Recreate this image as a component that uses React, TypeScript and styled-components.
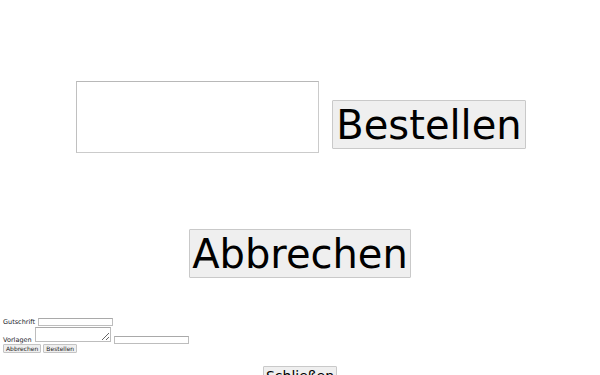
import React from 'react';
import styled, { createGlobalStyle } from 'styled-components';

const GlobalStyle = createGlobalStyle`
  html, body {
    margin: 0;
    padding: 0;
    background: #fff;
    font-family: "DejaVu Sans", "Liberation Sans", sans-serif;
    color: #000;
    overflow: hidden;
  }
`;

const Page = styled.div`
  width: 600px;
  height: 375px;
  display: flex;
  flex-direction: column;
  overflow: hidden;
`;

const OrderRow = styled.div`
  display: flex;
  justify-content: center;
  align-items: flex-end;
  gap: 13px;
  margin-top: 81px;
  padding-left: 2px;
`;

const BigInput = styled.input`
  box-sizing: border-box;
  width: 243px;
  height: 72px;
  margin: 0;
  border: 1px solid #cbcbcb;
  border-top-color: #b8b8b8;
  border-left-color: #c0c0c0;
  background: #fff;
  outline: none;
`;

const Button = styled.button<{ $size: number; $height: number; $pad: number }>`
  box-sizing: border-box;
  height: ${(p) => p.$height}px;
  margin: 0;
  padding: 0 ${(p) => p.$pad}px;
  font-family: "DejaVu Sans", sans-serif;
  font-size: ${(p) => p.$size}px;
  line-height: 1;
  color: #000;
  background: #efefef;
  border: 1px solid #c9c9c9;
  border-radius: 1px;
  white-space: nowrap;
`;

const OrderButton = styled(Button)`
  margin-bottom: 4px;
`;

const CenterRow = styled.div<{ $top: number }>`
  display: flex;
  justify-content: center;
  margin-top: ${(p) => p.$top}px;
`;

const SmallForm = styled.form`
  display: flex;
  flex-direction: column;
  align-items: flex-start;
  margin-top: 38px;
  padding-left: 3px;
  font-size: 6.5px;
`;

const FieldRow = styled.div<{ $align: string; $height: number }>`
  display: flex;
  align-items: ${(p) => p.$align};
  gap: 3px;
  height: ${(p) => p.$height}px;
`;

const Label = styled.label`
  font-size: 6.5px;
  line-height: 8px;
  color: #1a1a2a;
`;

const SmallInput = styled.input`
  box-sizing: border-box;
  width: 75px;
  height: 8px;
  margin: 0;
  padding: 0;
  border: 1px solid #bdbdbd;
  border-top-color: #a9a9a9;
  background: #fff;
`;

const SmallTextArea = styled.textarea`
  box-sizing: border-box;
  width: 76px;
  height: 15px;
  margin: 0 0 2px 0;
  padding: 0;
  border: 1px solid #bdbdbd;
  border-top-color: #a9a9a9;
  resize: both;
  font-size: 6px;
`;

const ButtonRow = styled.div`
  display: flex;
  gap: 2px;
`;

const SmallButton = styled.button`
  box-sizing: border-box;
  height: 9px;
  margin: 0;
  padding: 0 2px;
  font-family: "DejaVu Sans", sans-serif;
  font-size: 6px;
  line-height: 1;
  color: #222;
  background: #efefef;
  border: 1px solid #c4c4c4;
  border-radius: 1px;
`;

export default function App() {
  return (
    <Page>
      <GlobalStyle />
      <OrderRow>
        <BigInput type="text" />
        <OrderButton $size={40} $height={49} $pad={3}>
          Bestellen
        </OrderButton>
      </OrderRow>
      <CenterRow $top={76}>
        <Button $size={40} $height={49} $pad={2}>
          Abbrechen
        </Button>
      </CenterRow>
      <SmallForm onSubmit={(e) => e.preventDefault()}>
        <FieldRow $align="center" $height={11}>
          <Label>Gutschrift</Label>
          <SmallInput type="text" />
        </FieldRow>
        <FieldRow $align="flex-end" $height={17}>
          <Label>Vorlagen</Label>
          <SmallTextArea />
          <SmallInput type="text" />
        </FieldRow>
        <ButtonRow>
          <SmallButton type="button">Abbrechen</SmallButton>
          <SmallButton type="button">Bestellen</SmallButton>
        </ButtonRow>
      </SmallForm>
      <CenterRow $top={13}>
        <Button $size={14} $height={20} $pad={2}>
          Schließen
        </Button>
      </CenterRow>
    </Page>
  );
}
